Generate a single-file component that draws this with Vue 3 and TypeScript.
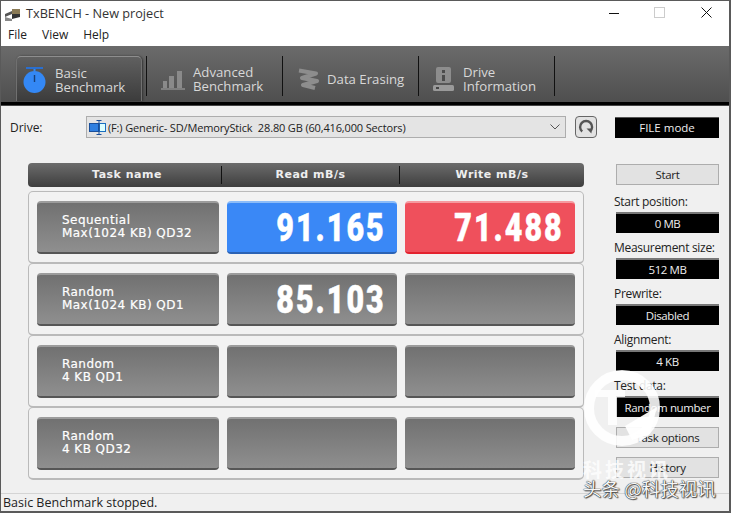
<template>
  <div class="window">
    <header class="titlebar">
      <svg class="app-icon" width="17" height="14" viewBox="0 0 17 14">
        <path d="M1 7l7-3v3l-7 3z" fill="#555" />
        <path d="M8 2h8v5H8z" fill="#8a7a55" />
        <path d="M8 7h8v3l-8 2z" fill="#333" />
        <path d="M1 10l7 2v2H1z" fill="#888" />
      </svg>
      <span class="title">TxBENCH - New project</span>
      <div class="controls">
        <svg width="10" height="10" viewBox="0 0 10 10" class="ctl ctl-min"><path d="M0 5.5h10" stroke="#111" /></svg>
        <svg width="11" height="11" viewBox="0 0 11 11" class="ctl ctl-max"><rect x=".5" y=".5" width="10" height="10" fill="none" stroke="#ccc" /></svg>
        <svg width="11" height="11" viewBox="0 0 11 11" class="ctl ctl-close"><path d="M.5.5l10 10M10.5.5l-10 10" stroke="#111" /></svg>
      </div>
    </header>
    <nav class="menubar">
      <span v-for="m in menus" :key="m">{{ m }}</span>
    </nav>

    <div class="toolbar">
      <div class="tab active">
        <svg width="24" height="27" viewBox="0 0 24 27">
          <rect x="3" y="0" width="17" height="2" fill="#2a6fd0" />
          <rect x="10.5" y="2" width="2" height="2" fill="#3488f5" />
          <circle cx="11.5" cy="15" r="11" fill="#3488f5" />
          <path d="M11.5 8v7" stroke="#173f78" stroke-width="1.4" />
        </svg>
        <span class="tab-text">Basic<br />Benchmark</span>
      </div>
      <i class="tab-sep"></i>
      <div class="tab">
        <svg width="24" height="22" viewBox="0 0 24 22">
          <path d="M2 13h4v7H2zM8 8h5v12H8zM16 3h5v17h-5z" fill="#8a8a8a" />
          <path d="M0 21h24" stroke="#8a8a8a" stroke-width="1.6" />
        </svg>
        <span class="tab-text">Advanced<br />Benchmark</span>
      </div>
      <i class="tab-sep"></i>
      <div class="tab">
        <svg width="22" height="22" viewBox="0 0 22 22">
          <path d="M2 2.5l17 3-14 4.500 15 3-14 4 12 3" fill="none" stroke="#8d8d8d" stroke-width="4" stroke-linejoin="round" />
        </svg>
        <span class="tab-text">Data Erasing</span>
      </div>
      <i class="tab-sep"></i>
      <div class="tab">
        <svg width="22" height="24" viewBox="0 0 22 24">
          <rect x="3" y="0" width="15" height="16" rx="2" fill="#8d8d8d" />
          <rect x="9" y="3" width="3" height="3" fill="#4c4c4c" />
          <rect x="9" y="8" width="3" height="6" fill="#4c4c4c" />
          <rect x="0" y="18" width="21" height="6" rx="1.5" fill="#9a9a9a" />
          <rect x="3" y="20" width="3" height="2" fill="#444" />
        </svg>
        <span class="tab-text">Drive<br />Information</span>
      </div>
      <i class="tab-sep"></i>
    </div>
    <div class="toolbar-edge"></div>

    <main class="content">
      <div class="drive-row">
        <label class="drive-label">Drive:</label>
        <div class="combo">
          <svg width="18" height="15" viewBox="0 0 18 15">
            <rect x=".5" y="3.500" width="9" height="8" fill="#2f7fe0" stroke="#1a4f9a" />
            <rect x="10.5" y="3.500" width="6" height="8" fill="#dff" stroke="#1a6fc0" />
            <path d="M10 0v15M7.500.5h5M7.500 14.500h5" stroke="#1a4f9a" fill="none" />
          </svg>
          <span class="combo-text">(F:) Generic- SD/MemoryStick&nbsp; 28.80 GB (60,416,000 Sectors)</span>
          <svg class="combo-arrow" width="10" height="6" viewBox="0 0 10 6"><path d="M.5.5L5 5 9.5.5" fill="none" stroke="#555" /></svg>
        </div>
        <button class="refresh">
          <svg width="16" height="16" viewBox="0 0 16 16">
            <path d="M4.2 12.5A6 6 0 1 1 12 12.5" fill="none" stroke="#555" stroke-width="2.4" />
            <path d="M8.5 9.5h5v5z" fill="#555" />
          </svg>
        </button>
        <div class="file-mode">FILE mode</div>
      </div>

      <div class="bench">
        <section class="table">
          <div class="thead">
            <div v-for="h in heads" :key="h" class="th">{{ h }}</div>
          </div>
          <div v-for="row in rows" :key="row.detail" class="row">
            <div class="cell task">{{ row.name }}<br />{{ row.detail }}</div>
            <div class="cell num" :class="{ read: row.hot }"><span>{{ row.read }}</span></div>
            <div class="cell num" :class="{ write: row.write }"><span>{{ row.write }}</span></div>
          </div>
        </section>

        <aside class="side">
          <button class="btn">Start</button>
          <div v-for="f in fields" :key="f.label" class="field">
            <label>{{ f.label }}</label>
            <div class="val">{{ f.value }}</div>
          </div>
          <button class="btn btn-task">Task options</button>
          <button class="btn btn-hist">History</button>
        </aside>
      </div>
    </main>

    <footer class="status">Basic Benchmark stopped.</footer>

    <!-- image host stamp over the bottom right corner -->
    <div class="watermark">
      <svg width="84" height="84" viewBox="0 0 84 84">
        <circle cx="42" cy="41" r="33" fill="none" stroke="#fff" stroke-opacity=".88" stroke-width="10" />
        <path d="M15 23h30v7H37v28h-9V30H15z" fill="#fff" fill-opacity=".85" />
        <path d="M45 59l32-19-7 27-18 6z" fill="#fff" fill-opacity=".95" />
      </svg>
      <span class="wm-name">科技视讯</span>
      <span class="wm-tag">头条 @科技视讯</span>
    </div>
  </div>
</template>

<script setup lang="ts">
interface Row {
  name: string
  detail: string
  read: string
  write: string
  hot?: boolean
}

const menus: string[] = ['File', 'View', 'Help']
const heads: string[] = ['Task name', 'Read mB/s', 'Write mB/s']

const rows: Row[] = [
  { name: 'Sequential', detail: 'Max(1024 KB) QD32', read: '91.165', write: '71.488', hot: true },
  { name: 'Random', detail: 'Max(1024 KB) QD1', read: '85.103', write: '' },
  { name: 'Random', detail: '4 KB QD1', read: '', write: '' },
  { name: 'Random', detail: '4 KB QD32', read: '', write: '' },
]

const fields = [
  { label: 'Start position:', value: '0 MB' },
  { label: 'Measurement size:', value: '512 MB' },
  { label: 'Prewrite:', value: 'Disabled' },
  { label: 'Alignment:', value: '4 KB' },
  { label: 'Test data:', value: 'Random number' },
]
</script>

<style>
html, body { margin: 0; background: #f0f0f0; }
</style>

<style scoped>
.window {
  position: relative;
  box-sizing: border-box;
  width: 731px;
  height: 513px;
  display: flex;
  flex-direction: column;
  overflow: hidden;
  border: 1px solid #5a5a5a;
  border-bottom-width: 2px;
  border-right-width: 2px;
  background: #f0f0f0;
  font-family: "Open Sans", "Noto Sans", sans-serif;
  font-size: 12px;
  color: #222;
}
.titlebar {
  height: 25px;
  flex: none;
  display: flex;
  align-items: center;
  background: #fff;
  padding-left: 3px;
}
.app-icon { margin-right: 5px; }
.title { font-size: 12.7px; color: #333; margin-top: -2px; }
.controls { margin-left: auto; display: flex; align-items: center; }
.ctl { display: block; margin-top: -2px; }
.ctl-min { margin-right: 35px; }
.ctl-max { margin-right: 36px; }
.ctl-close { margin-right: 17px; }
.menubar {
  height: 20px;
  flex: none;
  display: flex;
  gap: 15px;
  align-items: center;
  padding: 0 0 3px 7px;
  box-sizing: border-box;
  background: #fff;
  font-size: 12px;
  color: #222;
}
.toolbar {
  height: 56px;
  flex: none;
  box-sizing: border-box;
  display: flex;
  align-items: flex-start;
  padding: 10px 0 0 15px;
  background: linear-gradient(#6b6b6b, #4f4f4f);
  color: #ddd;
}
.toolbar-edge {
  height: 4px;
  flex: none;
  background: linear-gradient(#000 70%, #777);
}
.tab {
  width: 131px;
  height: 45px;
  box-sizing: border-box;
  display: flex;
  align-items: center;
  gap: 8px;
  padding: 1px 0 0 10px;
}
.tab.active {
  width: 126px;
  margin-right: 4px;
  padding: 2px 0 0 6px;
  border-radius: 5px 5px 0 0;
  border-top: 1px solid #8e8e8e;
  border-left: 1px solid #707070;
  border-right: 1px solid #707070;
  background: linear-gradient(#606060, #3c3c3c);
  box-shadow: 1px 0 2px #333;
}
.tab-text {
  font-size: 13.2px;
  line-height: 14px;
  color: #d8d8d8;
}
.tab-sep {
  width: 1px;
  height: 40px;
  flex: none;
  background: #111;
  margin-right: 4px;
}
.content {
  flex: 1;
  display: flex;
  flex-direction: column;
  min-height: 0;
}
.drive-row {
  display: flex;
  align-items: center;
  height: 22px;
  margin-top: 10px;
  padding-left: 9px;
}
.drive-label { width: 76px; flex: none; color: #222; }
.combo {
  width: 480px;
  height: 22px;
  box-sizing: border-box;
  display: flex;
  align-items: center;
  gap: 1px;
  padding: 0 5px 0 2px;
  background: #e4e4e4;
  border: 1px solid #adadad;
}
.combo-text { font-size: 11px; letter-spacing: -.15px; color: #222; white-space: nowrap; }
.combo-arrow { margin-left: auto; }
.refresh {
  width: 22px;
  height: 22px;
  box-sizing: border-box;
  margin-left: 9px;
  padding: 0;
  display: flex;
  align-items: center;
  justify-content: center;
  background: #e2e2e2;
  border: 1px solid #666;
  border-radius: 4px;
}
.file-mode {
  width: 104px;
  height: 20px;
  margin-left: 18px;
  display: flex;
  align-items: center;
  justify-content: center;
  background: #000;
  color: #eee;
  font-size: 11.5px;
  border-top: 1px solid #555;
}
.bench {
  display: flex;
  margin-top: 25px;
  padding-left: 27px;
}
.table { width: 556px; flex: none; }
.thead {
  height: 24px;
  display: grid;
  grid-template-columns: 193px 178px 185px;
  align-items: center;
  margin-bottom: 4px;
  border-radius: 4px;
  background: linear-gradient(#6c6c6c, #3e3e3e);
}
.th {
  text-align: center;
  height: 18px;
  line-height: 18px;
  border-left: 1px solid #111;
  color: #eee;
  font-family: "DejaVu Sans", sans-serif;
  font-weight: 700;
  font-size: 11px;
  letter-spacing: .5px;
}
.th:first-child { border-left: 0; padding-left: 5px; }
.row {
  box-sizing: border-box;
  height: 73px;
  margin-bottom: -1px;
  display: grid;
  grid-template-columns: 182px 170px 170px;
  gap: 8px;
  padding: 9px 8px 8px;
  border: 1px solid #bababa;
  border-bottom-width: 2px;
  border-radius: 5px;
  background: #f2f2f2;
}
.cell {
  box-sizing: border-box;
  height: 53px;
  border-radius: 4px;
  border-top: 2px solid #9c9c9c;
  border-bottom: 2px solid #565656;
  background: linear-gradient(#717171, #8f8f8f);
  color: #fff;
}
.task {
  padding: 11px 0 0 25px;
  font-family: "DejaVu Sans", sans-serif;
  font-size: 12px;
  line-height: 13px;
  letter-spacing: .45px;
  -webkit-text-stroke: .2px #fff;
}
.num {
  display: flex;
  align-items: center;
  justify-content: flex-end;
  padding: 1px 11px 0 0;
  font-family: "Roboto", sans-serif;
  font-weight: 900;
  font-size: 38px;
  letter-spacing: 2.5px;
  -webkit-text-stroke: .5px #fff;
}
.num span {
  display: block;
  transform: scaleX(.8);
  transform-origin: right center;
}
.read {
  background: #3a88f6;
  border-top-color: #8cbcf8;
  border-bottom-color: #2b62b4;
}
.write {
  background: #ef505c;
  border-top-color: #f59aa0;
  border-bottom-color: #e3222e;
}
.side {
  width: 103px;
  flex: none;
  margin-left: 32px;
  display: flex;
  flex-direction: column;
  padding-top: 1px;
}
.btn {
  height: 21px;
  padding: 0;
  box-sizing: border-box;
  background: #e2e2e2;
  border: 1px solid #adadad;
  font-family: inherit;
  font-size: 11.5px;
  letter-spacing: -.3px;
  color: #222;
}
.btn + .field { margin-top: 2px; }
.field label {
  display: block;
  height: 25px;
  line-height: 29px;
  margin-left: -2px;
  white-space: nowrap;
  font-size: 12px;
  letter-spacing: -.3px;
  color: #222;
}
.val {
  height: 21px;
  box-sizing: border-box;
  display: flex;
  align-items: center;
  justify-content: center;
  background: #000;
  border-top: 2px solid #777;
  color: #eee;
  font-size: 11.5px;
  letter-spacing: -.4px;
}
.btn-task { margin-top: 10px; }
.btn-hist { margin-top: 9px; }
.status {
  height: 18px;
  flex: none;
  box-sizing: border-box;
  border-top: 1px solid #d4d4d4;
  padding-left: 2px;
  font-size: 12.5px;
  line-height: 18px;
  color: #222;
}
.watermark {
  position: absolute;
  left: 579px;
  top: 366px;
  width: 150px;
  height: 135px;
  pointer-events: none;
}
.watermark svg { display: block; }
.wm-name {
  position: absolute;
  left: 3px;
  top: 88px;
  font-family: "Noto Sans CJK SC", sans-serif;
  font-size: 19px;
  font-weight: 700;
  letter-spacing: 3px;
  color: rgba(255, 255, 255, .8);
  white-space: nowrap;
}
.wm-tag {
  position: absolute;
  left: 3px;
  top: 108px;
  font-family: "Noto Sans CJK SC", sans-serif;
  font-size: 18.5px;
  color: #f6f6f6;
  text-shadow: 0 0 1px #222, 0 0 1px #222, 1px 1px 1px #555;
  white-space: nowrap;
}
</style>
